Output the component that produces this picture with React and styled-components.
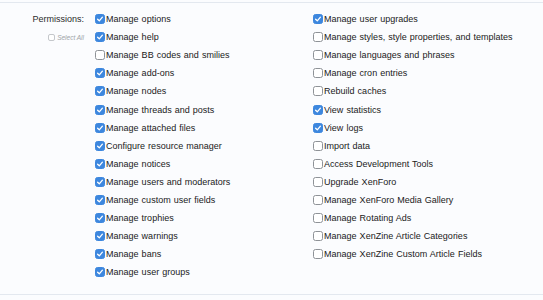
import React from "react";
import styled, { createGlobalStyle } from "styled-components";

const Global = createGlobalStyle`
  html, body { margin: 0; padding: 0; background: #fbfcfe; }
  body { font-family: "Liberation Sans", Arial, sans-serif; color: #1d1d1d; }
`;

const Page = styled.div`
  padding-top: 2px;
  width: 543px;
`;

const FormRow = styled.div`
  display: grid;
  grid-template-columns: 84px 1fr;
  column-gap: 11px;
  border-top: 1px solid #e3e8ef;
  border-bottom: 1px solid #e3e8ef;
  padding: 6px 0 13px;
`;

const LabelCol = styled.div`
  display: flex;
  flex-direction: column;
  align-items: flex-end;
`;

const Label = styled.div`
  height: 18px;
  line-height: 20px;
  font-size: 9px;
  color: #2b2b2b;
`;

const SelectAll = styled.label`
  height: 18px;
  display: flex;
  align-items: center;
  gap: 2px;
  font-size: 6.5px;
  font-style: italic;
  color: #a0a4a8;
  padding-top: 1px;
`;

const SmallBox = styled.span`
  width: 7px;
  height: 7px;
  border: 1px solid #c4c7cb;
  border-radius: 2px;
  background: #fff;
  box-sizing: border-box;
`;

const Columns = styled.div`
  display: grid;
  grid-template-columns: 218px 218px;
`;

const List = styled.div`
  display: flex;
  flex-direction: column;
  padding-top: 1px;
`;

const Item = styled.label`
  height: 18.1px;
  display: flex;
  align-items: center;
  gap: 1px;
  font-size: 9px;
  word-spacing: 0.6px;
  color: #1a1a1a;
  white-space: nowrap;
`;

const Box = styled.span`
  width: 10px;
  height: 10px;
  box-sizing: border-box;
  border-radius: 2.5px;
  display: flex;
  align-items: center;
  justify-content: center;
  border: 1px solid ${(p) => (p.$checked ? "#3d87de" : "#8e9297")};
  background: ${(p) => (p.$checked ? "#3d87de" : "#fff")};
`;

const Check = () => (
  <svg width="8" height="8" viewBox="0 0 8 8">
    <path d="M1.6 4.2 L3.3 5.8 L6.4 2.2" fill="none" stroke="#fff" strokeWidth="1.3" strokeLinecap="round" strokeLinejoin="round" />
  </svg>
);

const left = [
  ["Manage options", true],
  ["Manage help", true],
  ["Manage BB codes and smilies", false],
  ["Manage add-ons", true],
  ["Manage nodes", true],
  ["Manage threads and posts", true],
  ["Manage attached files", true],
  ["Configure resource manager", true],
  ["Manage notices", true],
  ["Manage users and moderators", true],
  ["Manage custom user fields", true],
  ["Manage trophies", true],
  ["Manage warnings", true],
  ["Manage bans", true],
  ["Manage user groups", true],
];

const right = [
  ["Manage user upgrades", true],
  ["Manage styles, style properties, and templates", false],
  ["Manage languages and phrases", false],
  ["Manage cron entries", false],
  ["Rebuild caches", false],
  ["View statistics", true],
  ["View logs", true],
  ["Import data", false],
  ["Access Development Tools", false],
  ["Upgrade XenForo", false],
  ["Manage XenForo Media Gallery", false],
  ["Manage Rotating Ads", false],
  ["Manage XenZine Article Categories", false],
  ["Manage XenZine Custom Article Fields", false],
];

const Options = ({ items }) => (
  <List>
    {items.map(([text, checked]) => (
      <Item key={text}>
        <Box $checked={checked}>{checked && <Check />}</Box>
        {text}
      </Item>
    ))}
  </List>
);

export default function App() {
  return (
    <Page>
      <Global />
      <FormRow>
        <LabelCol>
          <Label>Permissions:</Label>
          <SelectAll>
            <SmallBox />
            Select All
          </SelectAll>
        </LabelCol>
        <Columns>
          <Options items={left} />
          <Options items={right} />
        </Columns>
      </FormRow>
    </Page>
  );
}
